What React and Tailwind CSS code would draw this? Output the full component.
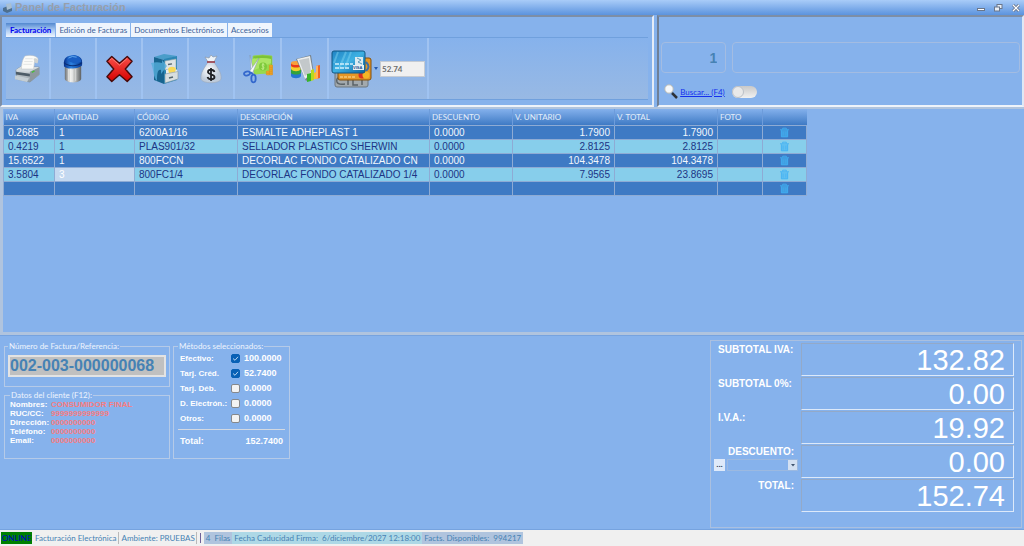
import { useState } from "react";
import { clsx } from "clsx";

const TABS = ["Facturación", "Edición de Facturas", "Documentos Electrónicos", "Accesorios"];

const COLUMNS = [
  { key: "iva", label: "IVA", width: "w-[51px]" },
  { key: "cantidad", label: "CANTIDAD", width: "w-[80px]" },
  { key: "codigo", label: "CÓDIGO", width: "w-[103px]" },
  { key: "descripcion", label: "DESCRIPCIÓN", width: "w-[192px]" },
  { key: "descuento", label: "DESCUENTO", width: "w-[83px]" },
  { key: "unitario", label: "V. UNITARIO", width: "w-[102px]", right: true },
  { key: "total", label: "V. TOTAL", width: "w-[103px]", right: true },
  { key: "foto", label: "FOTO", width: "w-[45px]" },
];

const ROWS = [
  { iva: "0.2685", cantidad: "1", codigo: "6200A1/16", descripcion: "ESMALTE ADHEPLAST 1", descuento: "0.0000", unitario: "1.7900", total: "1.7900" },
  { iva: "0.4219", cantidad: "1", codigo: "PLAS901/32", descripcion: "SELLADOR PLASTICO SHERWIN", descuento: "0.0000", unitario: "2.8125", total: "2.8125" },
  { iva: "15.6522", cantidad: "1", codigo: "800FCCN", descripcion: "DECORLAC FONDO CATALIZADO CN", descuento: "0.0000", unitario: "104.3478", total: "104.3478" },
  { iva: "3.5804", cantidad: "3", codigo: "800FC1/4", descripcion: "DECORLAC FONDO CATALIZADO 1/4", descuento: "0.0000", unitario: "7.9565", total: "23.8695" },
  {},
];

const CLIENT = [
  ["Nombres:", "CONSUMIDOR FINAL"],
  ["RUC/CC:", "9999999999999"],
  ["Dirección:", "0000000000"],
  ["Teléfono:", "0000000000"],
  ["Email:", "0000000000"],
];

const METHODS = [
  { id: "efectivo", label: "Efectivo:", value: "100.0000", checked: true },
  { id: "credito", label: "Tarj. Créd.", value: "52.7400", checked: true },
  { id: "debito", label: "Tarj. Déb.", value: "0.0000", checked: false },
  { id: "electronico", label: "D. Electrón.:", value: "0.0000", checked: false },
  { id: "otros", label: "Otros:", value: "0.0000", checked: false },
];

function PrinterIcon() {
  return (
    <svg width="28" height="32" viewBox="0 0 30 32">
      <defs>
        <linearGradient id="prBody" x1="0" y1="0" x2="0" y2="1">
          <stop offset="0" stopColor="#eef1f3" />
          <stop offset="1" stopColor="#8b979f" />
        </linearGradient>
      </defs>
      <path d="M2 17 8 13 27 14 27 22 17 30 3 27Z" fill="url(#prBody)" stroke="#7b8892" strokeWidth=".6" />
      <path d="M2 17 8 13 27 14 17 19Z" fill="#d4dbdf" />
      <path d="M17 19 27 14V22L17 30Z" fill="#8d989f" />
      <path d="M2 19 17 21V24L2 22Z" fill="#4d5c67" />
      <path d="M1 23 16 26 14 30 1 27Z" fill="#c4ced4" />
      <path d="M8 16C8 9 10 4 12 2 16 1 22 1 25 4 27 7 25 9 22 8L21 16Z" fill="#fbfbf8" stroke="#c2c6c7" strokeWidth=".6" />
      <path d="M21 5C25 3 27 7 25 10L22 9Z" fill="#cfd3d2" />
      <path d="M12 5H20M11 8H20M10 11H19" stroke="#d7dad9" strokeWidth=".7" />
      <path d="M19 19.500 22 18" stroke="#48bd38" strokeWidth="1.500" />
    </svg>
  );
}

function BinIcon() {
  return (
    <svg width="20" height="32" viewBox="0 0 22 32">
      <defs>
        <linearGradient id="binBody">
          <stop offset="0" stopColor="#6c7073" />
          <stop offset=".35" stopColor="#f1f1ee" />
          <stop offset=".65" stopColor="#b7b9b8" />
          <stop offset="1" stopColor="#5d6062" />
        </linearGradient>
        <linearGradient id="binLid">
          <stop offset="0" stopColor="#062f8b" />
          <stop offset=".4" stopColor="#2d82e1" />
          <stop offset="1" stopColor="#063793" />
        </linearGradient>
      </defs>
      <path d="M2 11H20V27C19 32 3 32 2 27Z" fill="url(#binBody)" />
      <path d="M6 16V29M10 17V30M14 16V29" stroke="#fff" strokeOpacity=".5" />
      <path d="M1 9C1 5 4 1 11 1 17 1 21 4 21 8V12C18 16 4 17 1 13Z" fill="url(#binLid)" />
      <path d="M4 6C5 2 10 1 13 1 18 2 20 5 20 8 15 11 8 9 4 6Z" fill="#1a5fc4" />
      <path d="M1 9C5 13 15 14 21 9" stroke="#0a2e74" strokeWidth="1.200" fill="none" />
      <path d="M6 4Q10 1 15 3" stroke="#68b0f3" fill="none" />
    </svg>
  );
}

function CancelIcon() {
  return (
    <svg width="29" height="30" viewBox="0 0 30 30">
      <defs>
        <linearGradient id="xRed" x1="0" y1="0" x2="0" y2="1">
          <stop offset="0" stopColor="#f8504a" />
          <stop offset="1" stopColor="#d50000" />
        </linearGradient>
      </defs>
      <path d="M7 2 15 9 23 2 28 7 21 15 28 23 23 28 15 21 7 28 2 23 9 15 2 7Z" fill="url(#xRed)" stroke="#470b0b" strokeWidth="1.500" strokeLinejoin="round" />
      <path d="M5 6 7 4 15 11 23 4" fill="none" stroke="#ff8880" strokeWidth=".8" />
    </svg>
  );
}

function CabinetIcon() {
  return (
    <svg width="30" height="32" viewBox="0 0 30 32">
      <path d="M4 4 14 1 27 3 14 7Z" fill="#4a9dc9" />
      <path d="M4 4 14 7V31L4 27Z" fill="#17648f" />
      <path d="M14 6 27 3V27L14 31Z" fill="#2b86b4" />
      <path d="M15 8 26 6V15L15 17Z" fill="#dfe4e5" stroke="#8fa2ab" strokeWidth=".6" />
      <path d="M18 11.500 22 10.800" stroke="#53656e" strokeWidth="1.300" />
      <path d="M16 17 25 14 28 19 16 22Z" fill="#e9eced" />
      <path d="M18 16C19 13 25 13 26 16L25 19 19 20Z" fill="#f8d958" />
      <path d="M15 21 28 18.500V26L15 30Z" fill="#d8dedf" stroke="#8397a1" strokeWidth=".6" />
      <path d="M19 25 23 24" stroke="#53656e" strokeWidth="1.300" />
      <path d="M1 10C5 9 9 9 12 10V7L17 13 11 21V17C8 16 7 19 7 28 3 24 4 17 1 10Z" fill="#55aedb" opacity=".8" />
    </svg>
  );
}

function MoneyBagIcon() {
  return (
    <svg width="22" height="32" viewBox="0 0 22 32">
      <defs>
        <radialGradient id="bag" cx=".4" cy=".4">
          <stop offset="0" stopColor="#ffffff" />
          <stop offset="1" stopColor="#bfcbda" />
        </radialGradient>
      </defs>
      <path d="M8 9 5 4 9 5 11 2 13 4 17 3 14 9Z" fill="#edf3f8" stroke="#8e9bab" strokeWidth=".7" />
      <path d="M8 9H14C17 14 22 20 21 26 20 31 2 31 1 26 0 20 5 14 8 9Z" fill="url(#bag)" stroke="#9aa7b8" strokeWidth=".6" />
      <path d="M7 9H15" stroke="#9b3440" strokeWidth="1.500" />
      <path d="M14.500 19C13.500 16 8 16 8 19 8 22 14.500 20.500 14.500 24 14.500 27 8.500 27 7.500 24M11 15V28" fill="none" stroke="#202226" strokeWidth="1.800" />
    </svg>
  );
}

function CutMoneyIcon() {
  return (
    <svg width="30" height="30" viewBox="0 0 30 30">
      <path d="M10 2Q20 0 29 2V17Q20 16 10 18Z" fill="#7cc337" stroke="#98d656" strokeWidth=".7" />
      <path d="M9 5Q19 3 28 5V20Q19 19 9 21Z" fill="#97da4c" />
      <path d="M9 5Q19 3 28 5V9L9 17Z" fill="#b4e96f" opacity=".7" />
      <circle cx="20" cy="12.500" r="4" fill="#7fca3c" />
      <path d="M21.500 11C20 9.500 18 10.500 20 12.500 22 14 20 16 18.500 14.500M20 9V16" stroke="#c8f090" strokeWidth=".9" fill="none" />
      <g fill="#f9ae2a" stroke="#d77e0e" strokeWidth=".5">
        <ellipse cx="25" cy="20" rx="2" ry="1" />
        <ellipse cx="25" cy="18" rx="2" ry="1" />
        <ellipse cx="28" cy="20" rx="2" ry="1" />
        <ellipse cx="28" cy="18" rx="2" ry="1" />
        <ellipse cx="28" cy="16" rx="2" ry="1" />
        <ellipse cx="28" cy="14" rx="2" ry="1" />
        <ellipse cx="28" cy="12" rx="2" ry="1" />
      </g>
      <path d="M7 1 11 20 8 19Z" fill="#f0f4f8" stroke="#8497a9" strokeWidth=".5" />
      <path d="M16 4 9 20 6 18Z" fill="#f6f9fb" stroke="#8497a9" strokeWidth=".5" />
      <g fill="none" stroke="#3468cc" strokeWidth="1.800">
        <ellipse cx="4" cy="19.500" rx="3" ry="2" transform="rotate(-15 4 19.500)" />
        <ellipse cx="10.500" cy="24.500" rx="2.200" ry="3.800" />
      </g>
      <path d="M7 18 10 20" stroke="#3468cc" strokeWidth="2" />
    </svg>
  );
}

function ReportIcon() {
  return (
    <svg width="30" height="28" viewBox="0 0 30 28">
      <path d="M1 17V21C2 24 10 24 11 21V17Z" fill="#2577d3" />
      <path d="M1 14V18C3 20 9 20 11 18V14Z" fill="#33a33c" />
      <path d="M1 11V14C3 17 9 17 11 14V11Z" fill="#f4d02c" />
      <path d="M1 8V11C3 13 9 13 11 11V8Z" fill="#e8391c" />
      <ellipse cx="6" cy="8" rx="5" ry="2" fill="#f8a03a" />
      <path d="M6 4 21 0 24 20 16 26Z" fill="#76828a" />
      <path d="M7 4 20 1 23 18 15 24Z" fill="#eceeee" />
      <path d="M9 5 19 3 21 17 15 21Z" fill="#c3c8ca" />
      <path d="M17 19 21 18V26L17 27Z" fill="#38b42b" />
      <path d="M21 15 24 14V25L21 26Z" fill="#b7d921" />
      <path d="M24 18 26 17V24H24Z" fill="#f8c12c" />
      <path d="M26 11 30 10V23L26 24Z" fill="#ef6424" />
      <path d="M26 11 28 10.500V23.500L26 24Z" fill="#ffb05f" />
    </svg>
  );
}

function CardsIcon() {
  return (
    <svg width="42" height="38" viewBox="0 0 42 38">
      <defs>
        <linearGradient id="visa" x1="0" y1="0" x2="1" y2="1">
          <stop offset="0" stopColor="#1f83c4" />
          <stop offset=".5" stopColor="#3eb1e3" />
          <stop offset="1" stopColor="#0a629f" />
        </linearGradient>
      </defs>
      <rect x="4" y="17" width="33" height="20" rx="2" fill="#a2a9ad" stroke="#6d777e" />
      <path d="M14 28H8Q5 28 6 32 7 35 14 34M17 29V35M22 28V35H27M31 28V35M28 28H35" stroke="#596267" strokeWidth="1.500" fill="none" />
      <rect x="7" y="8" width="33" height="22" rx="2" fill="#e59625" stroke="#81500f" />
      <path d="M9 27H25" stroke="#ffe19d" strokeDasharray="3 1" />
      <path d="M35 12Q40 17 35 21" stroke="#3b6ea9" strokeWidth="2" fill="none" />
      <circle cx="31" cy="25" r="3.500" fill="#d83220" />
      <circle cx="35" cy="25" r="3.500" fill="#f4b626" />
      <rect x="1" y="1" width="33" height="22" rx="2" fill="url(#visa)" stroke="#125884" />
      <path d="M7 2 3 13M15 2 8 19M20 2 14 18" stroke="#81d4f2" strokeOpacity=".45" strokeWidth="2" />
      <path d="M4 14H22M4 18H18" stroke="#d1effb" strokeWidth="1.300" strokeDasharray="4 1" />
      <rect x="24" y="7" width="8" height="9" fill="#dbebf2" />
      <path d="M26 8 30 10 27 12 31 14" stroke="#5a9ab9" fill="none" />
      <rect x="22" y="15" width="11" height="5" fill="#e7f0f3" />
      <text x="22" y="19" fontSize="4" fontWeight="bold" fontFamily="Liberation Sans, sans-serif" fill="#174f90">VISA</text>
    </svg>
  );
}

function TrashIcon() {
  return (
    <svg width="9" height="11" viewBox="0 0 10 11" fill="none" stroke="#41b1f4">
      <path d="M0 2.500H10M3 2V.7H7V2" />
      <path d="M1.500 3V10.300H8.500V3" fill="#46b6f5" fillOpacity=".6" />
      <path d="M3.500 4.500V9M6.500 4.500V9" strokeWidth=".7" />
    </svg>
  );
}

const TOOLS = [
  { label: "Imprimir", icon: PrinterIcon, width: "w-[45px]" },
  { label: "Limpiar", icon: BinIcon, width: "w-[46px]" },
  { label: "Anular", icon: CancelIcon, width: "w-[46px]" },
  { label: "Archivo", icon: CabinetIcon, width: "w-[46px]" },
  { label: "Caja", icon: MoneyBagIcon, width: "w-[46px]" },
  { label: "Descuentos", icon: CutMoneyIcon, width: "w-[47px]" },
  { label: "Reportes", icon: ReportIcon, width: "w-[47px]" },
];

function TitleBar() {
  return (
    <header className="flex h-[15px] shrink-0 items-center justify-between bg-linear-to-b from-[#a9ccf8] to-[#5b93de] pr-1 pl-[3px]">
      <div className="flex items-center gap-[3px]">
        <svg width="9" height="10" viewBox="0 0 9 10">
          <path d="M0 5 5 3 9 4V8L4 10 0 8Z" fill="#4d6f8f" />
          <path d="M3 1 8 0 9 5 4 7Z" fill="#a8bfd3" />
        </svg>
        <h1 className="font-['Liberation_Sans',sans-serif] text-[11px] leading-[13px] font-bold text-[#979fab]">Panel de Facturación</h1>
      </div>
      <div className="flex items-center gap-[9px]">
        <button aria-label="Minimizar">
          <svg width="8" height="8" viewBox="0 0 8 8"><rect x=".5" y="4.500" width="7" height="2" fill="#fff" stroke="#6b778b" /></svg>
        </button>
        <button aria-label="Restaurar">
          <svg width="9" height="8" viewBox="0 0 9 8" fill="#e8eef6" stroke="#6b778b"><rect x="3" y=".5" width="5" height="4" /><rect x=".5" y="3" width="5" height="4" /></svg>
        </button>
        <button aria-label="Cerrar">
          <svg width="8" height="8" viewBox="0 0 8 8"><path d="M1 1 7 7M7 1 1 7" stroke="#6b778b" strokeWidth="3" /><path d="M1 1 7 7M7 1 1 7" stroke="#fff" strokeWidth="1.200" /></svg>
        </button>
      </div>
    </header>
  );
}

function Toolbar() {
  const [active, setActive] = useState(0);

  return (
    <section className="flex min-w-0 flex-[655] flex-col border-2 border-t-[#7d8ea6] border-r-[#e6edf7] border-b-[#eef3fa] border-l-[#7d8ea6] px-1 pt-[6px] pb-[5px]">
      <div className="flex h-[14px] gap-px" role="tablist">
        {TABS.map((tab, i) => (
          <button
            key={tab}
            role="tab"
            aria-selected={i === active}
            onClick={() => setActive(i)}
            className={clsx(
              "text-[8px] leading-[14px] whitespace-nowrap",
              i === active
                ? "bg-linear-to-b from-[#5288cf] via-[#a9c9f2] to-[#f0f6fe] px-1 font-bold text-[#0000f0]"
                : "bg-[#eff5fd] px-[3px] text-[#3c6097]"
            )}
          >
            {tab}
          </button>
        ))}
      </div>
      <div className="flex flex-1 border-t border-b border-[#70a0dd] bg-linear-to-b from-[#86b2ec] to-[#98b9e4]">
        {TOOLS.map(({ label, icon: Icon, width }) => (
          <button
            key={label}
            aria-label={label}
            className={clsx("flex shrink-0 items-center justify-center border-r-2 border-[#a0c3f1]", width)}
          >
            <Icon />
          </button>
        ))}
        <div className="flex w-[100px] shrink-0 items-center border-r-2 border-[#a0c3f1] pl-[2px]">
          <button className="flex items-center gap-px" aria-label="Tarjetas">
            <CardsIcon />
            <svg width="4" height="3" viewBox="0 0 4 3"><path d="M0 0H4L2 3Z" fill="#2559ad" /></svg>
          </button>
          <input
            aria-label="Monto tarjeta"
            defaultValue="52.74"
            className="ml-[2px] h-[16px] w-[45px] border border-[#c5cbd3] bg-[#f0f0f0] px-px text-[8px] font-bold text-[#6d6d6d]"
          />
        </div>
      </div>
    </section>
  );
}

function SearchPanel() {
  return (
    <section className="flex min-w-0 flex-[366] flex-col border-2 border-t-[#7d8ea6] border-r-[#dfe8f5] border-b-[#eef3fa] border-l-[#6f7f96] px-[2px] pt-[25px]">
      <div className="flex gap-[6px] font-['Liberation_Sans',sans-serif] text-[14px] font-bold text-[#4682b4]">
        <input aria-label="Cantidad" defaultValue="1" className="h-[31px] w-[65px] rounded-[4px] border border-[#a3bce2] px-2 text-right" />
        <input id="producto" aria-label="Producto" className="h-[31px] min-w-0 flex-1 rounded-[4px] border border-[#a3bce2] px-2" />
      </div>
      <div className="mt-[11px] flex items-center pl-[3px]">
        <svg width="14" height="15" viewBox="0 0 14 15">
          <path d="M8 9 13 14" stroke="#2d3237" strokeWidth="2.500" />
          <circle cx="5" cy="5" r="4.200" fill="#f5f8fb" stroke="#b7b9b5" />
        </svg>
        <a href="#producto" className="ml-[2px] w-[46px] text-[8px] leading-[12px] whitespace-nowrap text-[#1430ee] underline">Buscar... (F4)</a>
        <label className="ml-[6px] flex h-[12px] w-[25px] items-center rounded-full bg-linear-to-b from-[#c9c9c9] to-[#f1f1f1]">
          <input type="checkbox" aria-label="Modo de búsqueda" className="h-[12px] w-[12px] appearance-none rounded-full border border-[#bcc1c8] bg-[#e9e9e9] checked:ml-auto" />
        </label>
      </div>
    </section>
  );
}

function ItemsTable() {
  return (
    <table className="w-[803px] table-fixed border-collapse font-['Liberation_Sans',sans-serif] text-[10px]">
      <thead>
        <tr className="h-[16px] bg-linear-to-b from-[#84b1ec] to-[#3e7ac4] font-['Lato',sans-serif] text-[8px] leading-[14px] text-[#e3edf9]">
          {COLUMNS.map((c) => (
            <th key={c.key} className={clsx(c.width, "border-r border-[#6d9cdb] px-[2px] py-0 text-left font-normal")}>{c.label}</th>
          ))}
          <th className="w-[44px] p-0" aria-label="Eliminar" />
        </tr>
      </thead>
      <tbody>
        {ROWS.map((row, i) => (
          <tr key={i} className={i % 2 ? "bg-[#87ceeb] text-[#1c3484]" : "bg-[#3e7ac4] text-[#f2f7fd]"}>
            {COLUMNS.map((c) => (
              <td
                key={c.key}
                className={clsx(
                  "h-[14px] border border-[#8eabd4] px-1 py-0 leading-[13px] whitespace-nowrap",
                  c.right && "text-right",
                  i === 3 && c.key === "cantidad" && "bg-[#c3d8f0] text-white"
                )}
              >
                {row[c.key]}
              </td>
            ))}
            <td className="h-[14px] border border-[#8eabd4] p-0">
              <button className="mx-auto flex h-[13px] items-center" aria-label="Eliminar fila"><TrashIcon /></button>
            </td>
          </tr>
        ))}
      </tbody>
    </table>
  );
}

function Group({ title, className, children }) {
  return (
    <fieldset className={clsx("min-w-0 border border-[#b5cae8]", className)}>
      <legend className="px-px text-[8px] leading-[10px] text-[#eef4fd]">{title}</legend>
      {children}
    </fieldset>
  );
}

function MethodRow({ id, label, value, checked }) {
  return (
    <div className="flex h-[15px] items-center">
      <label htmlFor={id} className="w-[51px] text-[8px] whitespace-nowrap">{label}</label>
      <span className="relative flex">
        <input
          id={id}
          type="checkbox"
          defaultChecked={checked}
          className="peer h-[9px] w-[9px] appearance-none rounded-[2px] border border-[#85888c] bg-[#f3f3f3] checked:border-[#0860b5] checked:bg-[#0860b5]"
        />
        <svg className="pointer-events-none absolute inset-0 hidden peer-checked:block" width="9" height="9" viewBox="0 0 9 9" fill="none" stroke="#b8d4f0">
          <path d="M2 4.500 4 6.300 7 2.800" />
        </svg>
      </span>
      <span className="ml-1">{value}</span>
    </div>
  );
}

function TotalRow({ label, value, children }) {
  return (
    <div className="flex h-[34px]">
      <div className="w-[90px] shrink-0 pr-[7px] text-[10px] leading-[14px] font-bold text-white">
        {label}
        {children}
      </div>
      <output className="h-[33px] flex-1 border border-t-[#93a9c8] border-r-[#dce9fa] border-b-[#dce9fa] border-l-[#93a9c8] pr-2 text-right text-[29px] leading-[33px] text-white">
        {value}
      </output>
    </div>
  );
}

function Totals() {
  return (
    <section className="w-[312px] shrink-0 border border-[#aac0e0] pt-[2px] pr-[7px] font-['Liberation_Sans',sans-serif]">
      <TotalRow label={<div className="pl-[7px]">SUBTOTAL IVA:</div>} value="132.82" />
      <TotalRow label={<div className="pl-[7px]">SUBTOTAL 0%:</div>} value="0.00" />
      <TotalRow label={<div className="pl-[7px]">I.V.A.:</div>} value="19.92" />
      <TotalRow label={<div className="text-right">DESCUENTO:</div>} value="0.00">
        <div className="ml-[3px] flex w-[84px] gap-[2px]">
          <button className="h-[12px] w-[11px] bg-[#dfeafa] text-[8px] leading-[10px] text-[#35445c]">...</button>
          <div className="relative flex flex-1">
            <select aria-label="Descuento" className="h-[12px] w-full appearance-none border border-[#9cb9e0]" />
            <span className="pointer-events-none absolute top-px right-px flex h-[10px] w-[9px] items-center justify-center bg-[#d3e0f2]">
              <svg width="4" height="3" viewBox="0 0 4 3"><path d="M0 0H4L2 2.500Z" fill="#40546f" /></svg>
            </span>
          </div>
        </div>
      </TotalRow>
      <TotalRow label={<div className="text-right">TOTAL:</div>} value="152.74" />
    </section>
  );
}

function Summary() {
  return (
    <section className="flex h-[195px] shrink-0 items-start justify-between border-t border-b border-t-[#76a3df] border-b-[#76a3df] bg-[#86b2ec] pr-[2px] pl-[4px]">
      <div className="flex items-stretch gap-[3px] pt-[5px]">
        <div className="flex w-[166px] flex-col gap-[3px]">
          <Group title="Número de Factura/Referencia:" className="h-[46px] px-[3px]">
            <input
              aria-label="Número de Factura"
              defaultValue="002-003-000000068"
              className="mt-1 h-[22px] w-full border-2 border-[#e3e3e3] bg-[#c0c0c0] px-0 font-['Liberation_Sans',sans-serif] text-[16px] leading-[18px] font-bold text-[#4682b4]"
            />
          </Group>
          <Group title="Datos del cliente (F12):" className="flex-1 px-[5px]">
            <dl className="font-['Liberation_Sans',sans-serif] text-[8px] leading-[9px]">
              {CLIENT.map(([label, value]) => (
                <div key={label} className="flex">
                  <dt className="w-[41px] font-bold text-white">{label}</dt>
                  <dd className="font-bold text-[#f67c80]">{value}</dd>
                </div>
              ))}
            </dl>
          </Group>
        </div>
        <Group title="Métodos seleccionados:" className="h-[118px] w-[117px] px-1">
          <div className="px-[2px] font-['Liberation_Sans',sans-serif] text-[9px] leading-[11px] font-bold text-white">
            {METHODS.map((m) => <MethodRow key={m.id} {...m} />)}
          </div>
          <hr className="mt-[3px] border-[#d3d9e2]" />
          <div className="mt-[6px] flex justify-between px-[2px] font-['Liberation_Sans',sans-serif] text-[9px] leading-[11px] font-bold text-white">
            <span>Total:</span>
            <span>152.7400</span>
          </div>
        </Group>
      </div>
      <div className="flex self-stretch pt-1 pb-px">
        <Totals />
      </div>
    </section>
  );
}

function StatusBar() {
  return (
    <footer className="flex h-[16px] shrink-0 items-center bg-[#f0f0f0] pl-px text-[8px] leading-[12px] whitespace-nowrap text-[#4682b4]">
      <span className="w-[31px] bg-[#008000] text-center text-[#0000cd]">ONLINE</span>
      <span className="ml-[2px] border-r border-[#b9b9b9] px-px">Facturación Electrónica</span>
      <span className="ml-[2px] border-r border-[#b9b9b9] px-px">Ambiente: PRUEBAS</span>
      <span className="mx-[3px] h-[10px] w-px bg-[#6f6298]" />
      <span className="bg-[#b0c4de] px-[2px]">4&nbsp; Filas</span>
      <span className="bg-[#add8e6] px-[2px]">Fecha Caducidad Firma:&nbsp; 6/diciembre/2027 12:18:00</span>
      <span className="bg-[#b0c4de] px-[2px]">Facts. Disponibles:&nbsp; 994217</span>
    </footer>
  );
}

function App() {
  return (
    <div className="flex min-h-screen flex-col bg-[#b0c4de] font-['Lato',sans-serif]">
      <TitleBar />
      <div className="flex h-[92px] shrink-0 gap-[3px] bg-[#86b2ec]">
        <Toolbar />
        <SearchPanel />
      </div>
      <main className="mt-[2px] mb-[3px] ml-[3px] flex-1 bg-[#86b2ec]">
        <ItemsTable />
      </main>
      <Summary />
      <StatusBar />
    </div>
  );
}

export default App;
